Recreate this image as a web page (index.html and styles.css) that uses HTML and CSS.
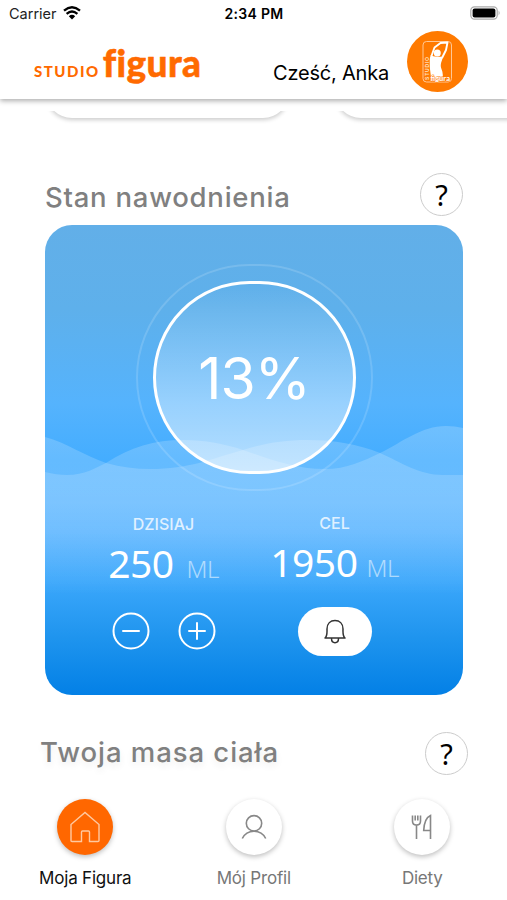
FILE: index.html
```
<!DOCTYPE html>
<html lang="pl">
<head>
	<meta charset="UTF-8">
	<title>Studio Figura</title>
	<link rel="stylesheet" href="styles.css">
</head>
<body>
	<div class="app">
		<div class="status">
			<div class="carrier">
				<span>Carrier</span>
				<svg width="18" height="14" viewBox="0 0 18 14">
					<path d="M1 4.6Q9-2.2 17 4.6M3.6 7.8Q9 3.2 14.4 7.8" fill="none" stroke="#000" stroke-width="2.3"/>
					<path d="M5.8 10.2Q9 7.4 12.2 10.2L9 13.5z"/>
				</svg>
			</div>
			<span class="time">2:34 PM</span>
			<div class="battery">
				<svg width="31" height="14" viewBox="0 0 31 14">
					<rect x=".8" y=".8" width="26.4" height="12.4" rx="3.6" fill="#fff" stroke="#aaa" stroke-width="1.2"/>
					<rect x="2.6" y="2.4" width="22.8" height="9.2" rx="2"/>
					<path d="M28.6 4.6q2 2.4 0 4.8z" fill="#aaa"/>
				</svg>
			</div>
		</div>

		<header class="header">
			<div class="logo"><span class="logo-small">STUDIO</span><span class="logo-big">figura</span></div>
			<span class="hello">Cześć, Anka</span>
			<svg class="avatar" width="61" height="61" viewBox="0 0 61 61">
				<circle cx="30.5" cy="30.5" r="30.5" fill="#ff7a00"/>
				<rect x="16" y="10.5" width="28.5" height="40.5" rx="3.5" fill="none" stroke="#ffc795" stroke-width="1"/>
				<path d="M24.5 25L27.5 16.5 33.5 12 40.5 11.5 39 19 35 27" fill="none" stroke="#fff" stroke-width="1.9" stroke-linejoin="round"/>
				<circle cx="30.3" cy="22" r="3.5" fill="#fff"/>
				<path d="M23.8 24C26.5 26.5 33 25.5 36 26C35 30 32.8 33 34.3 37.5C36.3 42 36 46 35.5 50H23.5C24.5 44 22.8 40 22.8 35C22.8 30 22.5 27 23.8 24z" fill="#fff"/>
				<text x="-49" y="22" class="avatar-side" transform="rotate(-90)" textLength="23">STUDIO</text>
				<text x="23.5" y="49.5" class="avatar-name" textLength="19.5" lengthAdjust="spacingAndGlyphs">figura</text>
			</svg>
		</header>

		<main class="content">
			<div class="strip">
				<div class="strip-card"></div>
				<div class="strip-card"></div>
			</div>

			<div class="title-row">
				<h2 class="title">Stan nawodnienia</h2>
				<span class="help">?</span>
			</div>

			<section class="water">
				<svg class="waves" width="418" height="470" viewBox="0 0 418 470">
					<defs>
						<linearGradient id="wave" gradientUnits="userSpaceOnUse" x1="0" y1="200" x2="0" y2="370">
							<stop offset="0" stop-color="#fff" stop-opacity=".19"/>
							<stop offset=".45" stop-color="#fff" stop-opacity=".15"/>
							<stop offset="1" stop-color="#fff" stop-opacity="0"/>
						</linearGradient>
					</defs>
					<path fill="url(#wave)" d="M0 212C22 218 40 231 61 238C76 242 90 244 105 244C145 244 165 234 198 225C220 218 240 215 262 215C290 215 312 219 335 228C355 237 375 250 397 250L418 250V370H0z"/>
					<path fill="url(#wave)" d="M0 247C8 249 14 250 22 250C40 250 50 243 61 238C85 222 110 215 138 215C160 215 180 219 198 225C222 233 248 244 280 244C302 244 318 236 335 228C358 217 376 201 401 201Q410 201 418 203V370H0z"/>
				</svg>
				<div class="ring">
					<div class="gauge">13%</div>
				</div>
				<div class="stats">
					<div class="stat">
						<span class="stat-label">DZISIAJ</span>
						<div class="amount">250<span class="unit unit-far">ML</span></div>
						<div class="buttons">
							<svg width="38" height="38" viewBox="0 0 38 38"><circle cx="19" cy="19" r="17.5"/><path d="M11 19H27"/></svg>
							<svg width="38" height="38" viewBox="0 0 38 38"><circle cx="19" cy="19" r="17.5"/><path d="M11 19H27M19 11V27"/></svg>
						</div>
					</div>
					<div class="stat stat-goal">
						<span class="stat-label">CEL</span>
						<div class="amount">1950<span class="unit">ML</span></div>
						<div class="bell">
							<svg width="22" height="25" viewBox="0 0 22 25">
								<path d="M1 19C3.5 17 3 13 3 10C3 4.5 6.5 1.5 11 1.5S19 4.5 19 10C19 13 18.5 17 21 19zM7.5 19.5C7.5 25 14.5 25 14.5 19.5"/>
							</svg>
						</div>
					</div>
				</div>
			</section>

			<div class="title-row title-row-mass">
				<h2 class="title title-mass">Twoja masa ciała</h2>
				<span class="help">?</span>
			</div>
		</main>

		<nav class="nav">
			<div class="nav-item active">
				<div class="nav-icon">
					<svg width="32" height="32" viewBox="0 0 32 32"><path d="M2 13.5L16 1.5 30 13.5V29.5Q30 30.5 29 30.5H20.5V21Q20.5 20 19.5 20H13.5Q12.5 20 12.5 21V30.5H3Q2 30.5 2 29.5z"/></svg>
				</div>
				<span>Moja Figura</span>
			</div>
			<div class="nav-item">
				<div class="nav-icon">
					<svg width="26" height="26" viewBox="0 0 26 26"><circle cx="13" cy="9.3" r="7.7"/><path d="M1.3 24.5C6 14.8 20 14.8 24.7 24.5"/></svg>
				</div>
				<span>Mój Profil</span>
			</div>
			<div class="nav-item">
				<div class="nav-icon">
					<svg width="22" height="26" viewBox="0 0 22 26"><path d="M1.5 1.5V7C1.5 12.5 9.5 12.5 9.5 7V1.5M4.2 1.5V6.5M6.8 1.5V6.5M5.5 11.5V25M19.5 25V1.5C15 3.5 13 10 12.7 16.5H19.5"/></svg>
				</div>
				<span>Diety</span>
			</div>
		</nav>
	</div>
</body>
</html>
```
FILE: styles.css
```
*{box-sizing: border-box;}
body{margin: 0;background: #fff;font-family: Inter, "Liberation Sans", sans-serif;color: #000;}
.app{width: 507px;height: 900px;overflow: hidden;display: flex;flex-direction: column;}

/* status bar */
.status{height: 28px;flex: none;display: grid;grid-template-columns: 1fr auto 1fr;align-items: center;padding: 0 6px 2px 9px;font-size: 14.5px;position: relative;z-index: 3;background: #fff;}
.carrier{display: flex;align-items: center;gap: 6px;color: #222;}
.time{font-weight: 600;font-size: 14px;letter-spacing: .3px;margin-right: 2px;}
.battery{display: flex;justify-content: flex-end;}

/* header */
.header{height: 71px;flex: none;display: flex;align-items: flex-start;padding: 3px 39px 0 34px;box-shadow: 0 2px 5px rgba(0,0,0,.32);position: relative;z-index: 2;background: #fff;}
.logo{color: #ff6a00;font-family: Lato, sans-serif;font-weight: 900;display: flex;align-items: baseline;gap: 3px;margin-top: 12px;line-height: 40px;white-space: nowrap;}
.logo-small{font-size: 15px;letter-spacing: 1.5px;}
.logo-big{font-size: 37px;letter-spacing: .4px;-webkit-text-stroke: .5px #ff6a00;}
.hello{margin: 27px 18px 0 auto;font-size: 20px;line-height: 31px;letter-spacing: -.2px;white-space: nowrap;}
.avatar{flex: none;}
.avatar-side{font: 700 5px "Liberation Sans", sans-serif;fill: #ffe2c8;}
.avatar-name{font: 700 7px Lato, sans-serif;fill: #fff;stroke: #ff7a00;stroke-width: .8px;paint-order: stroke;}

.content{flex: 1;min-height: 0;}
/* lower edge of the scrolled list */
.strip{margin-top: 12px;height: 14px;overflow: hidden;display: flex;gap: 46px;padding-left: 46px;align-items: flex-start;}
.strip-card{flex: none;width: 243px;height: 60px;margin-top: -53px;border-radius: 26px;background: #fff;box-shadow: 0 2px 4px rgba(0,0,0,.2);}

.title-row{display: flex;justify-content: space-between;align-items: center;height: 44px;margin: 47px 44px 0 45px;}
.title{margin: 6px 0 0;font-size: 27.5px;font-weight: 500;line-height: 36px;letter-spacing: .75px;color: #808080;white-space: nowrap;}
.title-row-mass{margin: 36px 39px 0 40px;}
.title-mass{margin-top: -3px;letter-spacing: .95px;text-shadow: 0 4px 7px rgba(0,0,0,.07);}
.help{width: 43px;height: 43px;flex: none;border: 1.5px solid #ccc;border-radius: 50%;background: #fff;font: 29px/41px "Noto Sans", sans-serif;text-align: center;}

/* water card */
.water{position: relative;width: 418px;height: 470px;margin: 9px 0 0 45px;padding-top: 39px;border-radius: 27px;overflow: hidden;color: #fff;background: linear-gradient(#62afe8 0%, #5eb0eb 18%, #55b3fd 38%, #44adff 50%, #4eafff 65%, #3ba7fb 76%, #1e94ee 88%, #0380e6 100%);}
.waves{position: absolute;left: 0;top: 0;}
.ring{position: relative;width: 237px;height: 227px;margin-left: 90.5px;padding: 15px;border: 2px solid rgba(255,255,255,.15);border-radius: 114px;}
.gauge{width: 203px;height: 193px;border: 3px solid #fff;border-radius: 97px;background: linear-gradient(rgba(255,255,255,0), rgba(255,255,255,.62));display: flex;align-items: center;justify-content: center;font-size: 57px;font-weight: 400;letter-spacing: -1px;padding-top: 1px;}
.stats{position: relative;display: flex;padding-left: 33px;}
.stat{width: 171px;display: flex;flex-direction: column;align-items: center;padding-top: 21px;}
.stat-goal{padding-top: 20px;}
.stat-label{font-size: 16px;line-height: 24px;font-weight: 500;opacity: .78;}
.amount{font: 39px/54px "Noto Sans", sans-serif;letter-spacing: -.5px;white-space: nowrap;}
.unit{font-size: 24px;font-weight: 300;letter-spacing: -.5px;opacity: .55;margin-left: 9px;}
.unit-far{margin-left: 13px;}
.buttons{display: flex;gap: 28px;margin-top: 16px;}
.buttons svg{fill: none;stroke: #fff;stroke-width: 2;stroke-linecap: round;}
.bell{width: 74px;height: 49px;margin-top: 12px;border-radius: 25px;background: #fff;display: flex;align-items: center;justify-content: center;}
.bell svg{fill: none;stroke: #333;stroke-width: 1.5;stroke-linejoin: round;}

/* bottom navigation */
.nav{height: 105px;flex: none;display: flex;padding: 4px 0 0 1px;}
.nav-item{width: 168.5px;display: flex;flex-direction: column;align-items: center;font-size: 17px;line-height: 24px;letter-spacing: -.2px;color: #777;gap: 11px;}
.nav-icon{width: 56px;height: 56px;flex: none;border-radius: 50%;background: #fff;box-shadow: 0 2px 5px rgba(0,0,0,.25);display: flex;align-items: center;justify-content: center;}
.nav-icon svg{fill: none;stroke: #888;stroke-width: 1.6;}
.active{color: #111;}
.active .nav-icon{background: #ff6700;}
.active .nav-icon svg{stroke: #ffc9a0;stroke-width: 1.4;}
```
